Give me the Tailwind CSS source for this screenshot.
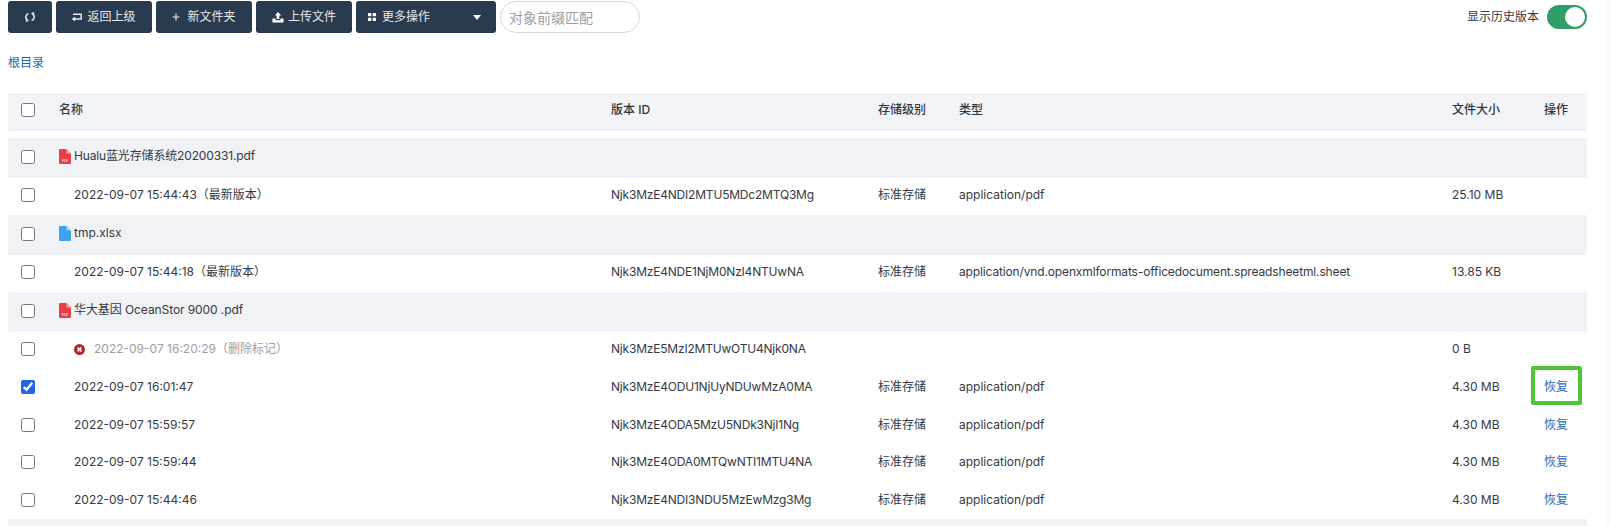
<!DOCTYPE html>
<html lang="zh">
<head>
<meta charset="utf-8">
<title>对象列表</title>
<script src="https://cdn.jsdelivr.net/npm/@tailwindcss/browser@4"></script>
</head>
<body class="bg-white text-[12px] text-[#333a44] font-['Inter','Noto_Sans_CJK_SC',sans-serif] overflow-hidden">
<div class="w-[1610px] h-[526px] overflow-hidden border-r-[4px] border-[#fafafa]">

  <!-- toolbar -->
  <div class="flex items-start justify-between pt-px pl-2 pr-[19px] h-[42px]">
    <div class="flex items-center h-8">
      <button class="w-[44px] h-8 mr-1 rounded-[3px] bg-[#2a3a4f] text-[#e6e9ed] flex items-center justify-center">
        <svg width="10" height="10" viewBox="0 0 10 10" fill="none" stroke="currentColor" stroke-width="1.6"><path d="M3.4 1.4A3.9 3.9 0 0 0 2.4 8.2M1.2 6.6L2.6 8.4L0.8 9.4M6.6 8.6A3.9 3.9 0 0 0 7.6 1.8M8.8 3.4L7.4 1.6L9.2 0.6"/></svg>
      </button>
      <button class="w-[96px] h-8 mr-1 rounded-[3px] bg-[#2a3a4f] text-[#e6e9ed] flex items-center justify-center gap-[5px]">
        <svg width="10" height="8" viewBox="0 0 10 8" fill="none" stroke="currentColor" stroke-width="1.5"><path d="M1 1.2H9.2V6H1.4M3 4.2L1 6L3 7.6"/></svg>
        <span>返回上级</span>
      </button>
      <button class="w-[96px] h-8 mr-1 rounded-[3px] bg-[#2a3a4f] text-[#e6e9ed] flex items-center justify-center gap-[7px]">
        <svg width="8" height="8" viewBox="0 0 8 8" stroke="currentColor" stroke-width="1.2"><path d="M4 0.5V7.5M0.5 4H7.5"/></svg>
        <span>新文件夹</span>
      </button>
      <button class="w-[96px] h-8 mr-1 rounded-[3px] bg-[#2a3a4f] text-[#e6e9ed] flex items-center justify-center gap-1">
        <svg width="12" height="11" viewBox="0 0 12 11" fill="#fff"><path d="M6 0L9.2 3.6H7.3V7H4.7V3.6H2.8ZM0.5 6.5H3.6V8.2H8.4V6.5H11.5V10.5H0.5Z"/></svg>
        <span>上传文件</span>
      </button>
      <button class="w-[140px] h-8 mr-[4px] rounded-[3px] bg-[#2a3a4f] text-[#e6e9ed] flex items-center pl-3 pr-[15px]">
        <svg class="mr-[6px]" width="8" height="8" viewBox="0 0 8 8" fill="#fff"><rect width="3.3" height="3.3" rx=".6"/><rect x="4.7" width="3.3" height="3.3" rx=".6"/><rect y="4.7" width="3.3" height="3.3" rx=".6"/><rect x="4.7" y="4.7" width="3.3" height="3.3" rx=".6"/></svg>
        <span>更多操作</span>
        <svg class="ml-auto" width="8" height="5" viewBox="0 0 8 5" fill="#fff"><path d="M0 0H8L4 5Z"/></svg>
      </button>
      <input class="w-[140px] h-8 rounded-full border border-[#d4d7dc] pl-2 pr-2.5 text-[14px] placeholder:text-[#9a9fa6] outline-none" placeholder="对象前缀匹配">
    </div>
    <div class="flex items-center gap-2 h-[32px]">
      <span>显示历史版本</span>
      <span class="relative w-10 h-6 rounded-full bg-[#2f9e68]">
        <span class="absolute right-0.5 top-0.5 w-5 h-5 rounded-full bg-white"></span>
      </span>
    </div>
  </div>

  <!-- breadcrumb -->
  <div class="pl-2 mt-[12px] h-[39px] text-[#1f5fa8]">根目录</div>

  <!-- object table -->
  <table class="ml-2 w-[1579px] table-fixed border-collapse">
    <colgroup>
      <col class="w-[51px]"><col class="w-[552px]"><col class="w-[267px]"><col class="w-[81px]"><col class="w-[493px]"><col class="w-[92px]"><col class="w-[43px]">
    </colgroup>
    <thead>
      <tr class="h-[37px] bg-[#f2f4f8] border-b border-[#e8eaee] text-left text-[#2f3640] [&>th]:pb-[2px]">
        <th class="pl-[13px]"><input type="checkbox" class="block w-[14px] h-[14px]"></th>
        <th class="font-medium">名称</th>
        <th class="font-medium">版本 ID</th>
        <th class="font-medium">存储级别</th>
        <th class="font-medium">类型</th>
        <th class="font-medium">文件大小</th>
        <th class="font-medium">操作</th>
      </tr>
    </thead>
    <tbody>
      <tr class="h-2"><td colspan="7"></td></tr>

      <tr class="h-[40px] bg-[#f0f2f6] [&>td]:pb-[3px]">
        <td class="pl-[13px]"><input type="checkbox" class="block w-[14px] h-[14px]"></td>
        <td colspan="6"><div class="flex items-center gap-[3px]">
          <svg width="12" height="15" viewBox="0 0 12 15"><path fill="#e5404a" d="M0 1Q0 0 1 0H7.5L12 4.4V14Q12 15 11 15H1Q0 15 0 14Z"/><path fill="#f5a5a8" d="M7.5 0L12 4.4H7.5Z"/><text x="6" y="13" text-anchor="middle" font-size="3" font-family="Liberation Sans" fill="#fff">PDF</text></svg>
          <span class="mb-0.5 tracking-[-0.15px]">Hualu蓝光存储系统20200331.pdf</span></div></td>
      </tr>
      <tr class="h-[37px] [&>td]:pb-[3px]">
        <td class="pl-[13px]"><input type="checkbox" class="block w-[14px] h-[14px]"></td>
        <td class="pl-[15px]">2022-09-07 15:44:43（最新版本）</td>
        <td class="tracking-[-0.2px]">Njk3MzE4NDI2MTU5MDc2MTQ3Mg</td><td>标准存储</td><td>application/pdf</td><td>25.10 MB</td><td></td>
      </tr>

      <tr class="h-[40px] bg-[#f0f2f6] [&>td]:pb-[3px]">
        <td class="pl-[13px]"><input type="checkbox" class="block w-[14px] h-[14px]"></td>
        <td colspan="6"><div class="flex items-center gap-[3px]">
          <svg width="12" height="15" viewBox="0 0 12 15"><path fill="#3ba3f0" d="M0 1Q0 0 1 0H7.5L12 4.4V14Q12 15 11 15H1Q0 15 0 14Z"/><path fill="#a5d5f8" d="M7.5 0L12 4.4H7.5Z"/></svg>
          <span class="mb-0.5">tmp.xlsx</span></div></td>
      </tr>
      <tr class="h-[37px] [&>td]:pb-[3px]">
        <td class="pl-[13px]"><input type="checkbox" class="block w-[14px] h-[14px]"></td>
        <td class="pl-[15px]">2022-09-07 15:44:18（最新版本）</td>
        <td class="tracking-[-0.2px]">Njk3MzE4NDE1NjM0NzI4NTUwNA</td><td>标准存储</td><td class="tracking-[-0.14px]">application/vnd.openxmlformats-officedocument.spreadsheetml.sheet</td><td>13.85 KB</td><td></td>
      </tr>

      <tr class="h-[40px] bg-[#f0f2f6] [&>td]:pb-[3px]">
        <td class="pl-[13px]"><input type="checkbox" class="block w-[14px] h-[14px]"></td>
        <td colspan="6"><div class="flex items-center gap-[3px]">
          <svg width="12" height="15" viewBox="0 0 12 15"><path fill="#e5404a" d="M0 1Q0 0 1 0H7.5L12 4.4V14Q12 15 11 15H1Q0 15 0 14Z"/><path fill="#f5a5a8" d="M7.5 0L12 4.4H7.5Z"/><text x="6" y="13" text-anchor="middle" font-size="3" font-family="Liberation Sans" fill="#fff">PDF</text></svg>
          <span class="mb-0.5 tracking-[-0.08px]">华大基因 OceanStor 9000 .pdf</span></div></td>
      </tr>
      <tr class="h-[37.4px] [&>td]:pb-[3px]">
        <td class="pl-[13px]"><input type="checkbox" class="block w-[14px] h-[14px]"></td>
        <td class="pl-[15px]"><div class="flex items-center gap-[9px] text-[#9a9ea5]">
          <svg width="11" height="11" viewBox="0 0 11 11"><circle cx="5.5" cy="5.5" r="5.5" fill="#b3282d"/><path d="M3.6 3.6L7.4 7.4M7.4 3.6L3.6 7.4" stroke="#fff" stroke-width="1.5"/></svg>
          <span>2022-09-07 16:20:29（删除标记）</span></div></td>
        <td class="tracking-[-0.2px]">Njk3MzE5MzI2MTUwOTU4Njk0NA</td><td></td><td></td><td>0 B</td><td></td>
      </tr>
      <tr class="h-[37.4px] [&>td]:pb-[2px]">
        <td class="pl-[13px]"><input type="checkbox" checked class="block w-[14px] h-[14px] accent-[#2563eb]"></td>
        <td class="pl-[15px]">2022-09-07 16:01:47</td>
        <td class="tracking-[-0.2px]">Njk3MzE4ODU1NjUyNDUwMzA0MA</td><td>标准存储</td><td>application/pdf</td><td>4.30 MB</td>
        <td class="relative text-[#2b6cb8]">恢复
          <span class="absolute -left-[13px] -top-[3px] w-[51px] h-[39px] border-4 border-[#4fc638] rounded-[2px]"></span>
        </td>
      </tr>
      <tr class="h-[37.4px] [&>td]:pb-px">
        <td class="pl-[13px]"><input type="checkbox" class="block w-[14px] h-[14px]"></td>
        <td class="pl-[15px]">2022-09-07 15:59:57</td>
        <td class="tracking-[-0.2px]">Njk3MzE4ODA5MzU5NDk3NjI1Ng</td><td>标准存储</td><td>application/pdf</td><td>4.30 MB</td><td class="text-[#2b6cb8]">恢复</td>
      </tr>
      <tr class="h-[37.4px] [&>td]:pb-[2px]">
        <td class="pl-[13px]"><input type="checkbox" class="block w-[14px] h-[14px]"></td>
        <td class="pl-[15px]">2022-09-07 15:59:44</td>
        <td class="tracking-[-0.2px]">Njk3MzE4ODA0MTQwNTI1MTU4NA</td><td>标准存储</td><td>application/pdf</td><td>4.30 MB</td><td class="text-[#2b6cb8]">恢复</td>
      </tr>
      <tr class="h-[37.4px] [&>td]:pb-px">
        <td class="pl-[13px]"><input type="checkbox" class="block w-[14px] h-[14px]"></td>
        <td class="pl-[15px]">2022-09-07 15:44:46</td>
        <td class="tracking-[-0.2px]">Njk3MzE4NDI3NDU5MzEwMzg3Mg</td><td>标准存储</td><td>application/pdf</td><td>4.30 MB</td><td class="text-[#2b6cb8]">恢复</td>
      </tr>
      <tr class="h-[40px] bg-[#f0f2f6]"><td colspan="7"></td></tr>
    </tbody>
  </table>
</div>
</body>
</html>
